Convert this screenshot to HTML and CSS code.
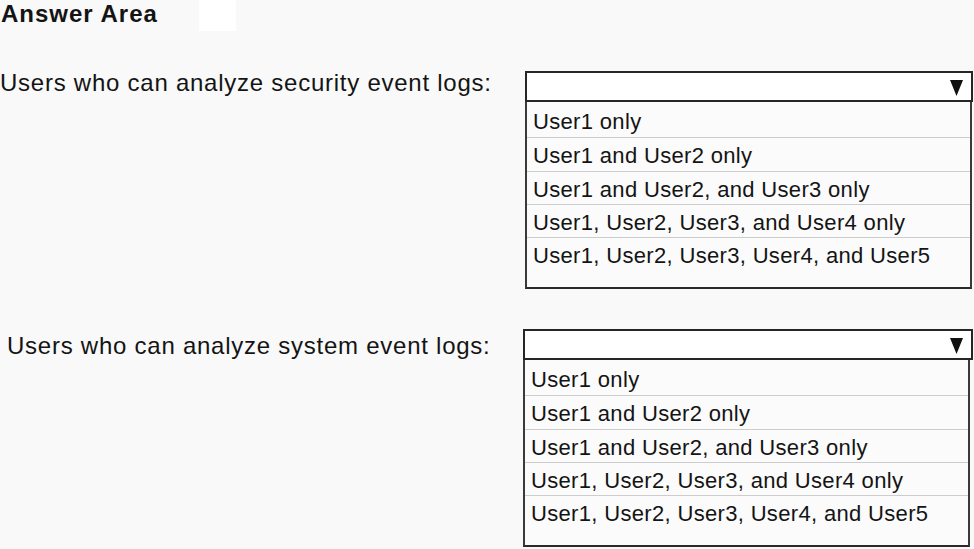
FILE: index.html
```html
<!DOCTYPE html>
<html lang="en">
<head>
<meta charset="utf-8">
<title>Answer Area</title>
<link rel="stylesheet" href="styles.css">
</head>
<body>
<main class="page">
  <header class="title-row">
    <h1 class="title">Answer Area</h1>
    <span class="patch"></span>
  </header>

  <section class="question q1">
    <div class="label">Users who can analyze security event logs:</div>
    <div class="dropdown">
      <div class="dd-head">
        <svg class="arrow" width="13" height="17" viewBox="0 0 13 17"><polygon points="0,1 13,1 6.5,17" fill="#111"/></svg>
      </div>
      <ul class="dd-list">
        <li class="opt">User1 only</li>
        <li class="opt">User1 and User2 only</li>
        <li class="opt">User1 and User2, and User3 only</li>
        <li class="opt">User1, User2, User3, and User4 only</li>
        <li class="opt last">User1, User2, User3, User4, and User5</li>
      </ul>
    </div>
  </section>

  <section class="question q2">
    <div class="label">Users who can analyze system event logs:</div>
    <div class="dropdown">
      <div class="dd-head">
        <svg class="arrow" width="13" height="17" viewBox="0 0 13 17"><polygon points="0,1 13,1 6.5,17" fill="#111"/></svg>
      </div>
      <ul class="dd-list">
        <li class="opt">User1 only</li>
        <li class="opt">User1 and User2 only</li>
        <li class="opt">User1 and User2, and User3 only</li>
        <li class="opt">User1, User2, User3, and User4 only</li>
        <li class="opt last">User1, User2, User3, User4, and User5</li>
      </ul>
    </div>
  </section>
</main>
</body>
</html>
```

FILE: styles.css
```css
* { box-sizing: border-box; }

html, body {
  margin: 0;
  padding: 0;
  background: #f9f9f9;
}

body {
  font-family: "Liberation Sans", Arial, sans-serif;
  color: #141414;
  width: 974px;
  height: 549px;
  overflow: hidden;
}

.page {
  display: flex;
  flex-direction: column;
}

.title-row {
  display: flex;
  align-items: flex-start;
  height: 31px;
}

.title {
  margin: 0;
  padding-left: 1px;
  font-size: 24px;
  font-weight: bold;
  letter-spacing: 1px;
  line-height: 27px;
}

.patch {
  width: 37px;
  height: 31px;
  margin-left: 41px;
  background: #ffffff;
}

.question {
  display: flex;
  align-items: flex-start;
}

.q1 {
  margin-top: 40px;
  padding-left: 0;
}

.q2 {
  margin-top: 40px;
  padding-left: 7px;
}

.label {
  font-size: 24px;
  line-height: 28px;
  letter-spacing: 0.75px;
  white-space: nowrap;
}

.q1 .label {
  width: 525px;
  margin-top: -2px;
}

.q2 .label {
  width: 516px;
  margin-top: 3px;
}

.dropdown {
  display: flex;
  flex-direction: column;
  width: 448px;
}

.q2 .dropdown {
  width: 450px;
}

.dd-head {
  height: 31px;
  border: 2px solid #262626;
  background: #ffffff;
  display: flex;
  justify-content: flex-end;
  align-items: flex-start;
  padding-top: 6px;
  padding-right: 8px;
}

.arrow { display: block; }

.dd-list {
  list-style: none;
  margin: 0;
  padding: 0;
  margin-right: 1px;
  border-left: 2px solid #3a3a3a;
  border-right: 2px solid #3a3a3a;
  border-bottom: 2px solid #2a2a2a;
  background: #fbfbfb;
}

.q2 .dd-list {
  margin-right: 3px;
}

.opt {
  height: 33px;
  border-bottom: 1px solid #cdcdcd;
  padding-left: 6px;
  padding-top: 6px;
  font-size: 22px;
  line-height: 24px;
  letter-spacing: 0.33px;
  white-space: nowrap;
}

.opt:first-child {
  height: 36px;
  padding-top: 8px;
}

.opt:nth-child(2) {
  height: 34px;
}

.opt.last {
  height: 49px;
  border-bottom: none;
}
```
